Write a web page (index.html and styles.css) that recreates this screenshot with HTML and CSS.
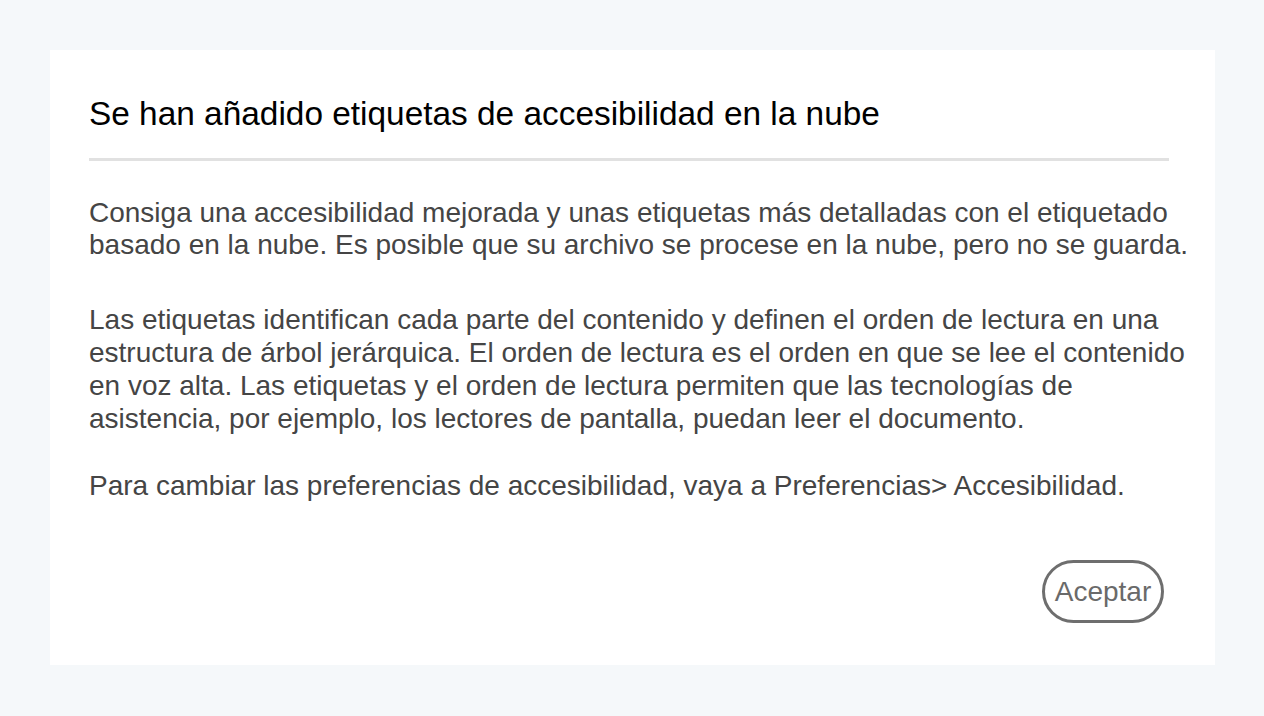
FILE: index.html
```html
<!DOCTYPE html>
<html lang="es">
<head>
<meta charset="utf-8">
<title>Etiquetas de accesibilidad</title>
<link rel="stylesheet" href="styles.css">
</head>
<body>
<div class="dialog">
  <h1 class="title">Se han añadido etiquetas de accesibilidad en la nube</h1>
  <div class="divider"></div>
  <div class="content">
    <p class="intro">Consiga una accesibilidad mejorada y unas etiquetas más detalladas con el etiquetado basado en la nube. Es posible que su archivo se procese en la nube, pero no se guarda.</p>
    <p class="info">Las etiquetas identifican cada parte del contenido y definen el orden de lectura en una estructura de árbol jerárquica. El orden de lectura es el orden en que se lee el contenido en voz alta. Las etiquetas y el orden de lectura permiten que las tecnologías de asistencia, por ejemplo, los lectores de pantalla, puedan leer el documento.</p>
    <p class="pref">Para cambiar las preferencias de accesibilidad, vaya a Preferencias&gt; Accesibilidad.</p>
  </div>
  <div class="actions">
    <button class="btn" type="button">Aceptar</button>
  </div>
</div>
</body>
</html>
```
FILE: styles.css
```css
html, body {
  margin: 0;
  padding: 0;
}
body {
  background: #f5f8fa;
  font-family: "Liberation Sans", Arial, sans-serif;
  width: 1264px;
  height: 716px;
  overflow: hidden;
  padding: 50px 0 0 50px;
  box-sizing: border-box;
}
.dialog {
  width: 1165px;
  height: 615px;
  background: #ffffff;
  box-sizing: border-box;
  padding: 0 15px 0 39px;
  display: flex;
  flex-direction: column;
}
.title {
  margin: 44px 0 0 0;
  font-size: 33.4px;
  font-weight: normal;
  color: #000000;
  line-height: 40px;
}
.divider {
  margin-top: 24px;
  width: 1080px;
  height: 3px;
  background: #e1e1e1;
}
.content {
  margin-top: 36px;
  color: #454545;
  font-size: 28px;
  line-height: 33px;
}
.content p {
  margin: 0;
}
.content .intro {
  line-height: 32px;
  margin-bottom: 42px;
}
.content .info {
  margin-bottom: 34px;
}
.actions {
  display: flex;
  justify-content: flex-end;
  padding-right: 36px;
  margin-top: 58px;
}
.btn {
  font-family: "Liberation Sans", Arial, sans-serif;
  font-size: 28px;
  color: #6a6a6a;
  background: #ffffff;
  border: 3px solid #6e6e6e;
  border-radius: 32px;
  width: 122px;
  height: 63px;
  padding: 0;
}
```
